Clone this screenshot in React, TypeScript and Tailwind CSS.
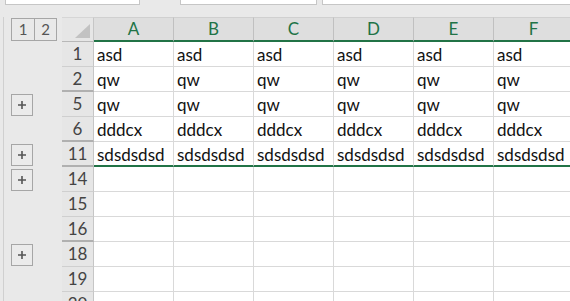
import React from 'react';

const COLS = ['A', 'B', 'C', 'D', 'E', 'F'];

type Row = {
  num: number;
  text?: string;
  plus?: boolean;
  hiddenAfter?: boolean;
  green?: boolean;
};

const ROWS: Row[] = [
  { num: 1, text: 'asd' },
  { num: 2, text: 'qw', hiddenAfter: true },
  { num: 5, text: 'qw', plus: true },
  { num: 6, text: 'dddcx', hiddenAfter: true },
  { num: 11, text: 'sdsdsdsd', plus: true, hiddenAfter: true, green: true },
  { num: 14, plus: true },
  { num: 15 },
  { num: 16, hiddenAfter: true },
  { num: 18, plus: true },
  { num: 19 },
  { num: 20 },
];

function PlusBox() {
  return (
    <div className="w-[22px] h-[22px] border border-[#a6a6a6] bg-[#ebebeb] flex items-center justify-center">
      <svg width="10" height="10" viewBox="0 0 10 10">
        <path d="M5 1v8M1 5h8" stroke="#555" strokeWidth="1.6" />
      </svg>
    </div>
  );
}

export default function App() {
  return (
    <div
      className="w-[570px] h-[301px] overflow-hidden bg-[#e9e9e9] flex flex-col text-[#222]"
      style={{ fontFamily: 'Lato, "Liberation Sans", sans-serif' }}
    >
      {/* formula bar remnants */}
      <div className="h-[17px] flex-shrink-0 flex items-start">
        <div className="ml-[5px] w-[135px] h-[5px] bg-white border border-t-0 border-[#c6c6c6]" />
        <div className="ml-[40px] w-[137px] h-[5px] bg-white border border-t-0 border-[#c6c6c6]" />
        <div className="ml-[5px] flex-1 h-[5px] bg-white border border-t-0 border-r-0 border-[#c6c6c6]" />
      </div>

      {/* column header row */}
      <div className="h-[25px] flex-shrink-0 flex border-l border-[#d0d0d0] ml-[3px]">
        <div className="w-[58px] flex-shrink-0 flex items-start pt-[1px] pl-[7px]">
          <div className="w-[24px] h-[23px] border border-[#a6a6a6] flex items-center justify-center text-[15px] text-[#555]">1</div>
          <div className="w-[22px] h-[23px] border border-l-0 border-[#a6a6a6] flex items-center justify-center text-[15px] text-[#555]">2</div>
        </div>
        <div className="w-[32px] flex-shrink-0 border-b border-[#b8b8b8] border-r border-r-[#c6c6c6] border-t border-t-[#d6d6d6] bg-[#e6e6e6] flex items-end justify-end pr-[3px] pb-[3px]">
          <svg width="15" height="14" viewBox="0 0 15 14">
            <path d="M15 0V14H0Z" fill="#c2c2c2" />
          </svg>
        </div>
        {COLS.map((c) => (
          <div
            key={c}
            className="w-[80px] flex-shrink-0 bg-[#dedede] border-t border-[#d0d0d0] border-r border-r-[#c0c0c0] border-b-2 border-b-[#217346] flex items-center justify-center text-[17px] text-[#217346]"
          >
            {c}
          </div>
        ))}
      </div>

      {/* rows */}
      {ROWS.map((r) => (
        <div key={r.num} className="h-[25px] flex-shrink-0 flex border-l border-[#d0d0d0] ml-[3px]">
          <div className="w-[58px] flex-shrink-0 flex items-center pl-[7px]">
            {r.plus && <PlusBox />}
          </div>
          <div
            className={
              'w-[32px] flex-shrink-0 bg-[#e6e6e6] border-r border-[#c6c6c6] flex items-center justify-center text-[17px] text-[#444] ' +
              (r.hiddenAfter ? 'border-b-2 border-b-[#b0b0b0]' : 'border-b border-b-[#cfcfcf]')
            }
          >
            {r.num}
          </div>
          {COLS.map((c) => (
            <div
              key={c}
              className={
                'w-[80px] flex-shrink-0 bg-white border-r border-[#d9d9d9] flex items-center pl-[3px] pt-[2px] text-[17px] text-[#111] whitespace-nowrap overflow-hidden ' +
                (r.green ? 'border-b-2 border-b-[#217346]' : 'border-b border-b-[#d9d9d9]')
              }
            >
              {r.text}
            </div>
          ))}
        </div>
      ))}
    </div>
  );
}
